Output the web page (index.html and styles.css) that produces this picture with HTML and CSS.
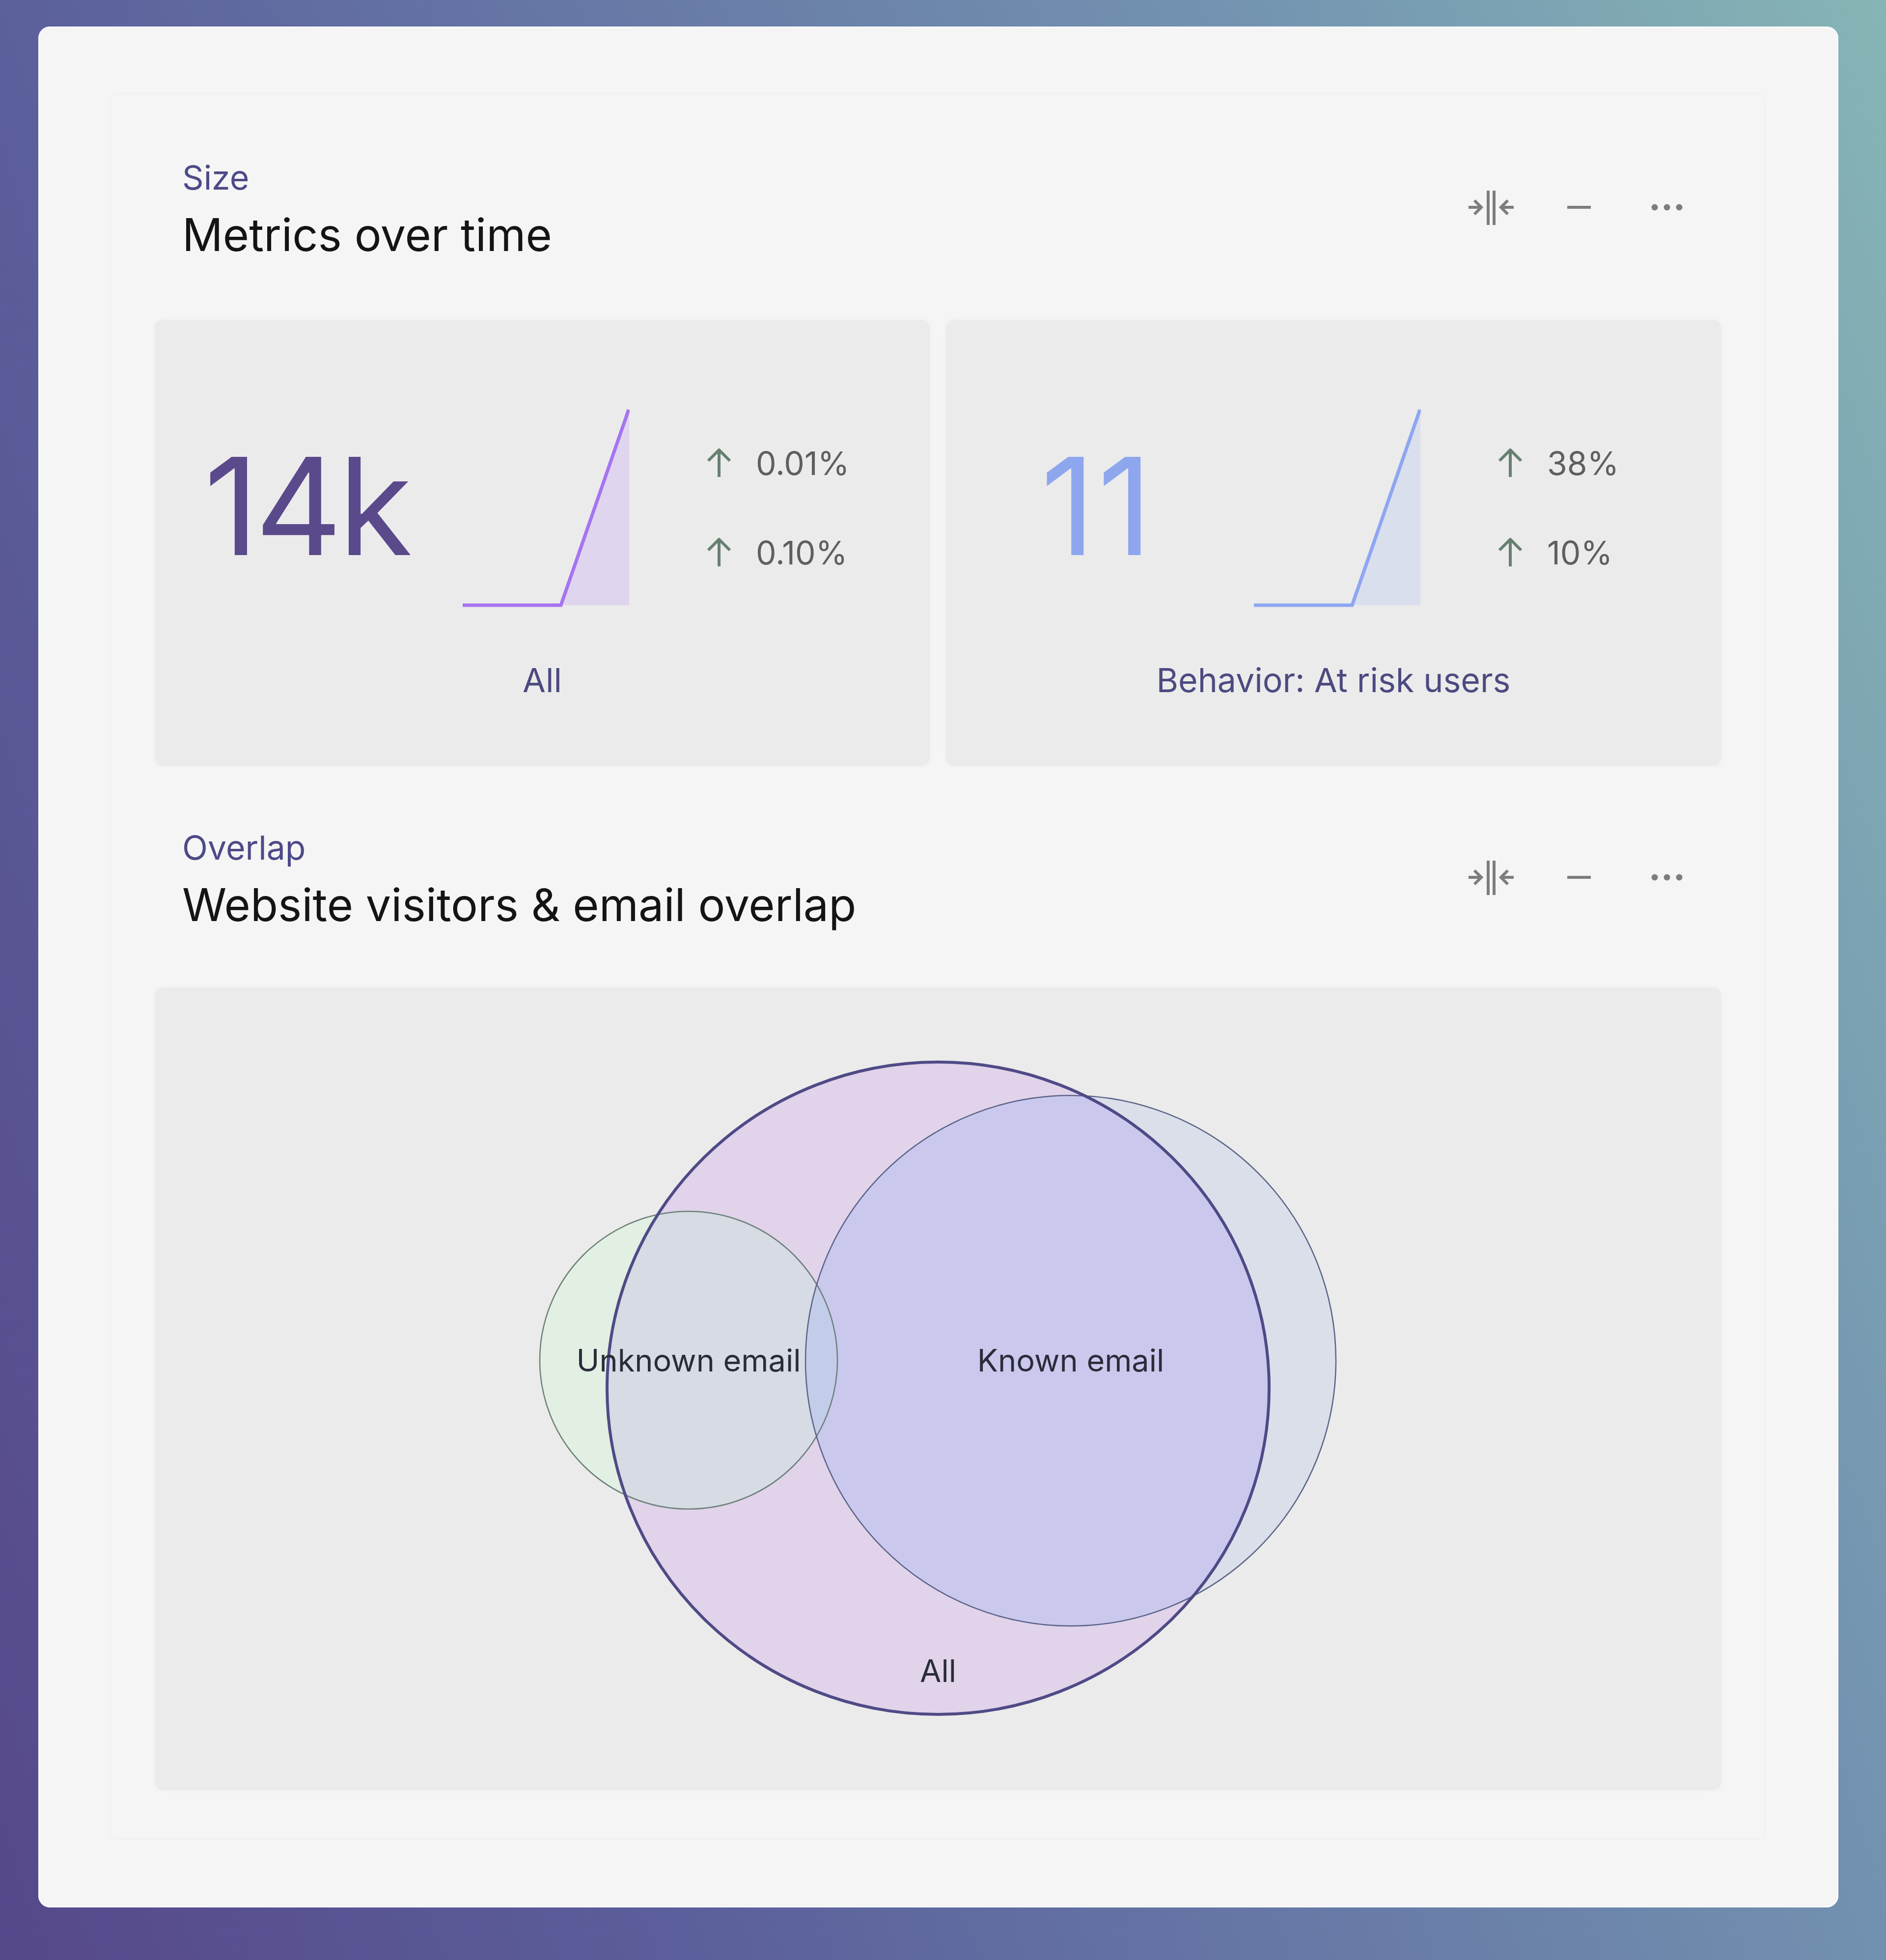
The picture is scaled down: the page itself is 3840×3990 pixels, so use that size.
FILE: index.html
```html
<!DOCTYPE html>
<html lang="en">
<head>
<meta charset="utf-8">
<title>Metrics</title>
<link rel="stylesheet" href="styles.css">
</head>
<body>
<main class="window">
  <div class="panel">
    <section class="section section-first">
      <header class="head">
        <div class="titles">
          <div class="eyebrow">Size</div>
          <h2 class="title">Metrics over time</h2>
        </div>
        <div class="actions">
          <svg class="icon" viewBox="0 0 100 80"><path d="M4 34H28M16 20l14 14-14 14M96 34H72M84 20 70 34l14 14M44 0V70M56 0V70"/></svg>
          <svg class="icon" viewBox="0 0 100 80"><path d="M26 34H74"/></svg>
          <svg class="icon" viewBox="0 0 100 80"><circle class="dot" cx="25" cy="34" r="6.5"/><circle class="dot" cx="50" cy="34" r="6.5"/><circle class="dot" cx="75" cy="34" r="6.5"/></svg>
        </div>
      </header>
      <div class="metrics">
        <article class="metric">
          <div class="metric-row">
            <div class="value value-purple">14k</div>
            <svg class="spark" viewBox="0 0 340 410"><polygon class="area-purple" points="201,402 339,8 339,402"/><polyline class="line-purple" points="0,402 200,402 338,4"/></svg>
            <div class="deltas">
              <div class="delta"><svg class="arrow" viewBox="0 0 52 60"><path d="M26 58V4M4 25 26 3l22 22"/></svg><span>0.01%</span></div>
              <div class="delta"><svg class="arrow" viewBox="0 0 52 60"><path d="M26 58V4M4 25 26 3l22 22"/></svg><span>0.10%</span></div>
            </div>
          </div>
          <div class="metric-label">All</div>
        </article>
        <article class="metric">
          <div class="metric-row">
            <div class="value value-blue">11</div>
            <svg class="spark" viewBox="0 0 340 410"><polygon class="area-blue" points="201,402 339,8 339,402"/><polyline class="line-blue" points="0,402 200,402 338,4"/></svg>
            <div class="deltas">
              <div class="delta"><svg class="arrow" viewBox="0 0 52 60"><path d="M26 58V4M4 25 26 3l22 22"/></svg><span>38%</span></div>
              <div class="delta"><svg class="arrow" viewBox="0 0 52 60"><path d="M26 58V4M4 25 26 3l22 22"/></svg><span>10%</span></div>
            </div>
          </div>
          <div class="metric-label">Behavior: At risk users</div>
        </article>
      </div>
    </section>
    <section class="section">
      <header class="head">
        <div class="titles">
          <div class="eyebrow">Overlap</div>
          <h2 class="title">Website visitors &amp; email overlap</h2>
        </div>
        <div class="actions">
          <svg class="icon" viewBox="0 0 100 80"><path d="M4 34H28M16 20l14 14-14 14M96 34H72M84 20 70 34l14 14M44 0V70M56 0V70"/></svg>
          <svg class="icon" viewBox="0 0 100 80"><path d="M26 34H74"/></svg>
          <svg class="icon" viewBox="0 0 100 80"><circle class="dot" cx="25" cy="34" r="6.5"/><circle class="dot" cx="50" cy="34" r="6.5"/><circle class="dot" cx="75" cy="34" r="6.5"/></svg>
        </div>
      </header>
      <div class="venn-card">
        <svg class="venn" viewBox="315 2010 3189 1634">
          <defs>
            <clipPath id="clip-all"><ellipse cx="1910" cy="2826" rx="674" ry="664"/></clipPath>
            <clipPath id="clip-known"><circle cx="2180" cy="2770" r="540"/></clipPath>
          </defs>
          <circle class="fill-unknown" cx="1402" cy="2769" r="303"/>
          <circle class="fill-known" cx="2180" cy="2770" r="540"/>
          <ellipse class="fill-all" cx="1910" cy="2826" rx="674" ry="664"/>
          <g clip-path="url(#clip-all)"><circle class="fill-unknown-all" cx="1402" cy="2769" r="303"/></g>
          <g clip-path="url(#clip-all)"><circle class="fill-known-all" cx="2180" cy="2770" r="540"/></g>
          <g clip-path="url(#clip-known)"><circle class="fill-triple" cx="1402" cy="2769" r="303"/></g>
          <circle class="stroke-unknown" cx="1402" cy="2769" r="303"/>
          <circle class="stroke-known" cx="2180" cy="2770" r="540"/>
          <ellipse class="stroke-all" cx="1910" cy="2826" rx="674" ry="664"/>
          <text class="venn-text" x="1402" y="2792">Unknown email</text>
          <text class="venn-text" x="2180" y="2792">Known email</text>
          <text class="venn-text" x="1910" y="3424">All</text>
        </svg>
      </div>
    </section>
  </div>
</main>
</body>
</html>
```
FILE: styles.css
```css
* { box-sizing: border-box; }
html, body { margin: 0; }
body {
  width: 3840px;
  height: 3990px;
  padding: 54px 97px 107px 78px;
  background: linear-gradient(70deg, #56488a 0%, #5b5f9b 27%, #7291b0 73%, #86b5b5 100%);
  font-family: Inter, "Liberation Sans", sans-serif;
}
.window {
  height: 100%;
  padding: 135px 148px 138px 145px;
  background: #f5f5f5;
  border-radius: 24px;
  box-shadow: inset 0 0 0 2px #fbfdff;
}
.panel {
  height: 100%;
  padding: 3px 88px 101px 89px;
  border-radius: 16px;
  border: 3px solid #f1f1f1;
}
.head {
  height: 451px;
  display: flex;
  align-items: flex-start;
  justify-content: space-between;
  padding: 126px 60px 0 56px;
}
.section-first .head { height: 456px; }
.eyebrow {
  font-size: 68px;
  line-height: 80px;
  color: #4c4a87;
}
.title {
  margin: 22px 0 0;
  font-size: 91.6px;
  line-height: 110px;
  font-weight: 400;
  color: #141414;
}
.actions {
  display: flex;
  gap: 79px;
  margin-top: 67px;
}
.icon {
  width: 100px;
  height: 80px;
  fill: none;
  stroke: #7d7d7d;
  stroke-width: 6;
}
.dot { fill: #7d7d7d; stroke: none; }
.metrics {
  display: grid;
  grid-template-columns: 1fr 1fr;
  gap: 33px;
}
.metric {
  height: 908px;
  background: #ebebeb;
  border-radius: 16px;
  padding-top: 179px;
  box-shadow: 0 0 10px #eeeeee;
}
.metric-row {
  display: flex;
  align-items: flex-start;
  height: 410px;
}
.value {
  width: 627px;
  padding-right: 10px;
  text-align: center;
  font-size: 275px;
  line-height: 400px;
  letter-spacing: -8px;
  font-kerning: none;
}
.value-purple { color: #5a4a8c; }
.value-blue { color: #8ea6ee; letter-spacing: 4px; }
.spark { width: 340px; height: 410px; flex: none; }
.spark polyline { fill: none; stroke-width: 7; }
.line-purple { stroke: #a574f2; }
.line-blue { stroke: #8ea6f2; }
.area-purple { fill: #e0d5ef; }
.area-blue { fill: #dadfee; }
.deltas {
  margin-left: 156px;
  padding-top: 68px;
  display: flex;
  flex-direction: column;
  gap: 92px;
}
.delta {
  display: flex;
  align-items: center;
  gap: 49px;
  height: 90px;
  font-size: 66px;
  color: #5f5f5f;
}
.arrow {
  width: 52px;
  height: 60px;
  fill: none;
  stroke: #66806f;
  stroke-width: 6;
}
.metric-label {
  margin-top: 99px;
  text-align: center;
  font-size: 68px;
  line-height: 90px;
  color: #4b4a80;
}
.venn-card {
  height: 1634px;
  background: #ebebeb;
  border-radius: 16px;
  box-shadow: 0 0 10px #eeeeee;
}
.venn { display: block; width: 100%; height: 100%; }
.fill-unknown { fill: #e2efe3; }
.fill-known { fill: #dbdfea; }
.fill-all { fill: #e0d3ea; }
.fill-unknown-all { fill: #d6dbe4; }
.fill-known-all { fill: #cbc8ee; }
.fill-triple { fill: #c3cdea; }
.stroke-unknown, .stroke-known, .stroke-all { fill: none; }
.stroke-unknown { stroke: #6d8078; stroke-width: 2.5; }
.stroke-known { stroke: #5a6487; stroke-width: 2.5; }
.stroke-all { stroke: #4f4a86; stroke-width: 6; }
.venn-text {
  font-size: 63px;
  fill: #2a2c3a;
  text-anchor: middle;
}
```
